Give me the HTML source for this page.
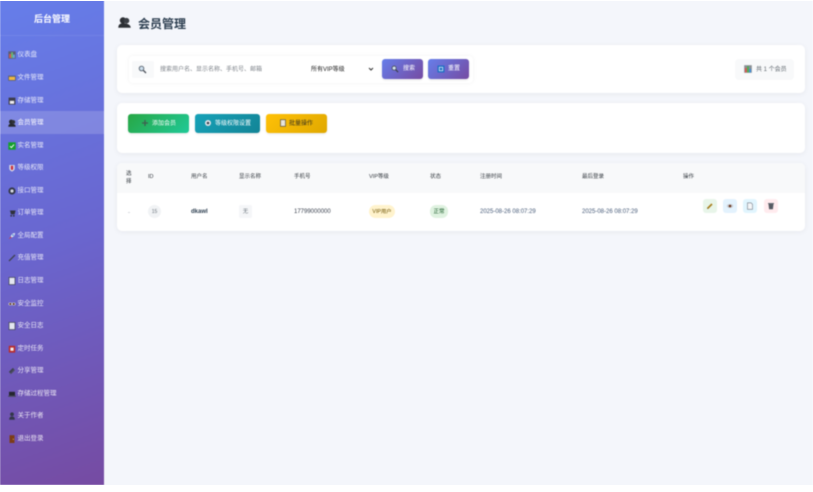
<!DOCTYPE html>
<html lang="zh"><head><meta charset="utf-8"><title>会员管理</title>
<style>
*{box-sizing:border-box;margin:0;padding:0}
html,body{width:813px;height:492px;overflow:hidden;background:#fff}
body{font-family:"Liberation Sans","Noto Sans CJK SC",sans-serif;position:relative}
#clip{position:absolute;left:0;top:1px;width:813px;height:484px;overflow:hidden}
#p{position:absolute;left:0;top:-1px;width:813px;height:492px;filter:blur(.5px);background:#f4f6fb}
.a{position:absolute;white-space:nowrap}
#side{position:absolute;left:0;top:0;width:104px;height:485px;background:linear-gradient(160deg,#667eea 0%,#6a66cf 50%,#764ba2 100%)}
#side .h{position:absolute;left:0;top:0;width:104px;height:36px;border-bottom:1px solid rgba(255,255,255,.08);color:#fff;font-size:9px;font-weight:700;text-align:center;line-height:38px}
.it{position:absolute;left:8px;margin-top:.8px;font-size:6.5px;line-height:8px;height:8px;color:rgba(255,255,255,.85);white-space:nowrap}
.it svg{position:absolute;left:0;top:0;width:8px;height:8px}
.it span{position:absolute;left:9.500px;top:0}
#act{position:absolute;left:0;top:111px;width:104px;height:23px;background:rgba(255,255,255,.16)}
.card{position:absolute;left:117px;width:688px;background:#fff;border-radius:5px;box-shadow:0 1px 6px rgba(0,0,0,.06)}
.btn{position:absolute;border-radius:3px;color:#fff;font-size:6px;line-height:20px;box-shadow:0 1px 2px rgba(0,0,0,.1)}
.btn svg{position:absolute;width:8px;height:8px}
.btn span{position:absolute;white-space:nowrap}
.th{position:absolute;top:173.500px;font-size:5.500px;line-height:7px;color:#343a40;white-space:nowrap}
.td{position:absolute;top:208.500px;font-size:6px;line-height:7px;color:#3c4350;white-space:nowrap}
.ab{position:absolute;top:199px;width:14px;height:14px;border-radius:3px}
.ab svg{position:absolute;left:3px;top:3px;width:8px;height:8px}
</style></head><body><div id="clip"><div id="p">

<div id="side">
<div class="h">后台管理</div>
<div id="act"></div>
<div class="it" style="top:50px"><svg viewBox="0 0 8 8"><rect x=".3" y=".3" width="7.400" height="7.400" fill="#5a5f78"/><rect x="1.300" y="3" width="1.700" height="4" fill="#e0574f"/><rect x="3.200" y="1.300" width="1.700" height="5.700" fill="#6cc070"/><rect x="5.100" y="3.600" width="1.700" height="3.400" fill="#6aa8e8"/></svg><span>仪表盘</span></div>
<div class="it" style="top:73px"><svg viewBox="0 0 8 8"><rect x=".2" y="1.600" width="7.600" height="5.200" fill="#5a5f78"/><rect x="1" y="2.800" width="6" height="3.200" fill="#f0b840"/></svg><span>文件管理</span></div>
<div class="it" style="top:96px"><svg viewBox="0 0 8 8"><rect x=".6" y=".6" width="6.800" height="7" fill="#3c3c4c"/><rect x="1.800" y="3.800" width="4.400" height="3" fill="#f0eef2"/></svg><span>存储管理</span></div>
<div class="it" style="top:118.500px;color:#fff"><svg viewBox="0 0 8 8"><circle cx="3.200" cy="2.800" r="2.200" fill="#26292e"/><circle cx="5.300" cy="3" r="1.900" fill="#2f3338"/><path d="M.3 7.800c0-2.400 1.400-3.200 3.200-3.200s4.200.6 4.200 3.200z" fill="#26292e"/></svg><span>会员管理</span></div>
<div class="it" style="top:141px"><svg viewBox="0 0 8 8"><rect x=".3" y=".3" width="7.400" height="7.400" fill="#14a02c"/><path d="M2 4.200l1.400 1.400L6 2.600" stroke="#fff" stroke-width=".9" fill="none"/></svg><span>实名管理</span></div>
<div class="it" style="top:163.500px"><svg viewBox="0 0 8 8"><path d="M1.300 1h5.400v3.400c0 1.600-1.300 2.500-2.700 3.200-1.400-.7-2.700-1.600-2.700-3.200z" fill="#d8dcec"/><path d="M2.800 1.800h2.400v3.400L4 6.200l-1.200-1z" fill="#c8303c"/></svg><span>等级权限</span></div>
<div class="it" style="top:186px"><svg viewBox="0 0 8 8"><circle cx="4" cy="4" r="3.600" fill="#34384a"/><circle cx="4" cy="4" r="1.600" fill="#d8dae4"/></svg><span>接口管理</span></div>
<div class="it" style="top:208.500px"><svg viewBox="0 0 8 8"><path d="M.6 1.600h1.400l1 3.800h3.600L7.600 1.500H2.600z" fill="#2f323c"/><circle cx="3.200" cy="6.800" r=".9" fill="#2f323c"/><circle cx="5.800" cy="6.800" r=".9" fill="#2f323c"/></svg><span>订单管理</span></div>
<div class="it" style="top:231px"><svg viewBox="0 0 8 8"><path d="M7 1c-2.200.2-3.600 1.500-4.300 3.400l1 1C5.500 4.800 6.900 3.300 7 1z" fill="#e6eaf2"/><circle cx="5" cy="3" r=".8" fill="#2f80d0"/><path d="M2.600 4.600L.8 7.300l2.800-1.800z" fill="#d83a3a"/></svg><span>全局配置</span></div>
<div class="it" style="top:253.500px"><svg viewBox="0 0 8 8"><path d="M7 1L1 7" stroke="#3e4250" stroke-width="1.300"/></svg><span>充值管理</span></div>
<div class="it" style="top:276px"><svg viewBox="0 0 8 8"><rect x="1" y=".4" width="6" height="7.200" fill="#e4e7f0" stroke="#3e4250" stroke-width=".7"/></svg><span>日志管理</span></div>
<div class="it" style="top:299px"><svg viewBox="0 0 8 8"><ellipse cx="2.300" cy="4" rx="1.900" ry="1.500" fill="#c9c9d4"/><ellipse cx="5.700" cy="4" rx="1.900" ry="1.500" fill="#c9c9d4"/><circle cx="2.300" cy="4" r="1" fill="#5a3018"/><circle cx="5.700" cy="4" r="1" fill="#5a3018"/></svg><span>安全监控</span></div>
<div class="it" style="top:321.500px"><svg viewBox="0 0 8 8"><rect x="1" y=".4" width="6" height="7.200" fill="#e4e7f0" stroke="#3e4250" stroke-width=".7"/></svg><span>安全日志</span></div>
<div class="it" style="top:344px"><svg viewBox="0 0 8 8"><rect x=".8" y=".8" width="6.400" height="6.800" fill="#b82c2c"/><rect x="2.400" y="2.600" width="3.200" height="3.200" fill="#f0f0f0"/></svg><span>定时任务</span></div>
<div class="it" style="top:366.500px"><svg viewBox="0 0 8 8"><path d="M1.500 5.500l4-4" stroke="#3e4250" stroke-width="1.900"/><path d="M2.500 6.700l4-4" stroke="#4a4e5c" stroke-width="1.300"/></svg><span>分享管理</span></div>
<div class="it" style="top:389px"><svg viewBox="0 0 8 8"><rect x="1" y="1.800" width="6" height="3.800" fill="#24262e"/><rect x=".2" y="5.600" width="7.600" height="1.200" fill="#444854"/></svg><span>存储过程管理</span></div>
<div class="it" style="top:411.500px"><svg viewBox="0 0 8 8"><circle cx="4" cy="2.300" r="1.900" fill="#33374a"/><path d="M1.200 7.800c0-2.600 1.100-3.300 2.800-3.300s2.800.7 2.800 3.300z" fill="#33374a"/></svg><span>关于作者</span></div>
<div class="it" style="top:434px"><svg viewBox="0 0 8 8"><rect x="1.500" y=".2" width="5" height="7.800" fill="#7c3c18"/><circle cx="5.300" cy="4.200" r=".5" fill="#f3d060"/></svg><span>退出登录</span></div>
</div>

<svg class="a" style="left:118px;top:17px;width:13px;height:11px" viewBox="0 0 13 11"><circle cx="5" cy="3.500" r="3.200" fill="#2d3035"/><circle cx="8.500" cy="3.700" r="2.800" fill="#3b3f45"/><path d="M.3 10.800c0-3.600 2.300-4.500 5-4.500s7.400.8 7.400 4.500z" fill="#2d3035"/></svg>
<div class="a" style="left:138px;top:15.500px;font-size:12px;line-height:16px;font-weight:700;color:#2c3e50">会员管理</div>

<div class="card" style="top:45px;height:48px"></div>
<div class="a" style="left:129px;top:56px;width:344px;height:27px;background:#fff;border-radius:4px;box-shadow:0 0 5px rgba(0,0,0,.06)"></div>
<div class="a" style="left:132px;top:61px;width:22px;height:17px;background:#f8f9fa;border-radius:2px"></div>
<svg class="a" style="left:138px;top:65px;width:9px;height:9px" viewBox="0 0 9 9"><circle cx="3.500" cy="3.500" r="2.300" fill="#cfe0ee" stroke="#5a6470" stroke-width=".9"/><path d="M5.300 5.300L8 8" stroke="#4a4f58" stroke-width="1.300"/></svg>
<div class="a" style="left:160px;top:66px;font-size:6px;line-height:8px;color:#7f848b">搜索用户名、显示名称、手机号、邮箱</div>
<div class="a" style="left:311px;top:65.500px;font-size:6px;line-height:8px;color:#222">所有VIP等级</div>
<svg class="a" style="left:368px;top:67px;width:6px;height:4px" viewBox="0 0 6 4"><path d="M1 1l2 2 2-2" stroke="#333" stroke-width="1" fill="none"/></svg>

<div class="btn" style="left:382px;top:59px;width:41px;height:20px;background:linear-gradient(135deg,#667eea,#764ba2)"><svg style="left:9px;top:6px" viewBox="0 0 9 9"><circle cx="3.500" cy="3.500" r="2.300" fill="#cfe0ee" stroke="#4a4f58" stroke-width=".9"/><path d="M5.300 5.300L8 8" stroke="#3a3f48" stroke-width="1.300"/></svg><span style="left:21px;top:0">搜索</span></div>
<div class="btn" style="left:428px;top:59px;width:41px;height:20px;background:linear-gradient(135deg,#667eea,#764ba2)"><svg style="left:9px;top:5.500px" viewBox="0 0 8 8"><rect x=".5" y=".5" width="7" height="7" fill="#1f6fc4"/><rect x="2.300" y="2.300" width="3.400" height="3.400" fill="none" stroke="#d8e8f8" stroke-width=".8"/></svg><span style="left:20px;top:0">重置</span></div>

<div class="a" style="left:735px;top:59px;width:59px;height:21px;background:#f8f9fa;border-radius:4px"></div>
<svg class="a" style="left:744px;top:65px;width:8px;height:8px" viewBox="0 0 8 8"><rect x=".2" y=".2" width="7.600" height="7.600" fill="#8a9096"/><rect x="1" y="3" width="1.800" height="4.500" fill="#d9554e"/><rect x="3.100" y="1.200" width="1.800" height="6.300" fill="#4caf50"/><rect x="5.200" y="3.800" width="1.800" height="3.700" fill="#3f8fd8"/></svg>
<div class="a" style="left:756px;top:65.500px;font-size:6px;line-height:8px;color:#5f676e">共 1 个会员</div>

<div class="card" style="top:103px;height:50px"></div>
<div class="btn" style="left:128px;top:113.500px;width:61px;height:19px;background:linear-gradient(135deg,#28a745,#20c997)"><svg style="left:13px;top:5px" viewBox="0 0 8 8"><path d="M4 1v6M1 4h6" stroke="#3f5f50" stroke-width="1.300"/></svg><span style="left:24px;top:0">添加会员</span></div>
<div class="btn" style="left:195px;top:113.500px;width:65px;height:19px;background:linear-gradient(135deg,#17a2b8,#138496)"><svg style="left:9px;top:5px" viewBox="0 0 8 8"><circle cx="4" cy="4" r="3" fill="#e0e4ea"/><circle cx="4" cy="4" r="1.300" fill="#3f4450"/></svg><span style="left:20px;top:0">等级权限设置</span></div>
<div class="btn" style="left:266px;top:113.500px;width:61px;height:19px;background:linear-gradient(135deg,#ffc107,#e0a800);color:#3a3420"><svg style="left:13px;top:5px" viewBox="0 0 8 8"><rect x="1.500" y=".7" width="5" height="6.600" fill="#e8e4d8" stroke="#5a5548" stroke-width=".7"/></svg><span style="left:23px;top:0">批量操作</span></div>

<div class="card" style="top:163px;height:68px;overflow:hidden"><div style="height:30px;background:#f8f9fa"></div></div>
<div class="th" style="left:126px;top:169.500px;width:6px;white-space:normal;line-height:8px">选择</div>
<div class="th" style="left:148px">ID</div>
<div class="th" style="left:191px">用户名</div>
<div class="th" style="left:239px">显示名称</div>
<div class="th" style="left:294px">手机号</div>
<div class="th" style="left:369px">VIP等级</div>
<div class="th" style="left:430px">状态</div>
<div class="th" style="left:480px">注册时间</div>
<div class="th" style="left:582px">最后登录</div>
<div class="th" style="left:683px">操作</div>

<div class="a" style="left:128px;top:211.500px;width:2px;height:1px;background:#d8dade"></div>
<div class="a" style="left:148px;top:205px;width:13px;height:13px;border-radius:50%;background:#f1f3f5;color:#6c757d;font-size:5px;line-height:14px;text-align:center">15</div>
<div class="td" style="left:191px;font-weight:700;color:#2c3e50">dkawl</div>
<div class="a" style="left:239px;top:205px;width:13px;height:13px;border-radius:2px;background:#f5f6f8;color:#6c757d;font-size:5.500px;line-height:14px;text-align:center">无</div>
<div class="td" style="left:294px">17799000000</div>
<div class="a" style="left:369px;top:205px;width:26px;height:13px;border-radius:7px;background:#fff3cd;color:#6f5404;font-size:5.300px;line-height:14px;text-align:center">VIP用户</div>
<div class="a" style="left:430px;top:205px;width:18px;height:13px;border-radius:6px;background:#dff2e0;color:#155724;font-size:5.500px;line-height:14px;text-align:center">正常</div>
<div class="td" style="left:480px;color:#465a78">2025-08-26 08:07:29</div>
<div class="td" style="left:582px;color:#465a78">2025-08-26 08:07:29</div>

<div class="ab" style="left:703px;background:#e8f5e9"><svg viewBox="0 0 8 8"><path d="M1.500 6.500L6 2" stroke="#a8801f" stroke-width="1.700"/><path d="M1 7l1-.5-.5-.5z" fill="#333"/></svg></div>
<div class="ab" style="left:723px;background:#e3f2fd"><svg viewBox="0 0 8 8"><ellipse cx="4" cy="4" rx="3.200" ry="2" fill="#c9ccd4"/><circle cx="4" cy="4" r="1.300" fill="#6b3a20"/></svg></div>
<div class="ab" style="left:743px;background:#e1f5fe"><svg viewBox="0 0 8 8"><path d="M1.500.8h3.500l1.500 1.500v5h-5z" fill="#f4f6f8" stroke="#777d88" stroke-width=".6"/></svg></div>
<div class="ab" style="left:763.500px;background:#ffebee"><svg viewBox="0 0 8 8"><path d="M1.500 2h5l-.6 5.200H2.100z" fill="#555a62"/><rect x="1" y="1" width="6" height="1" fill="#6a6f78"/></svg></div>

</div></div></body></html>
